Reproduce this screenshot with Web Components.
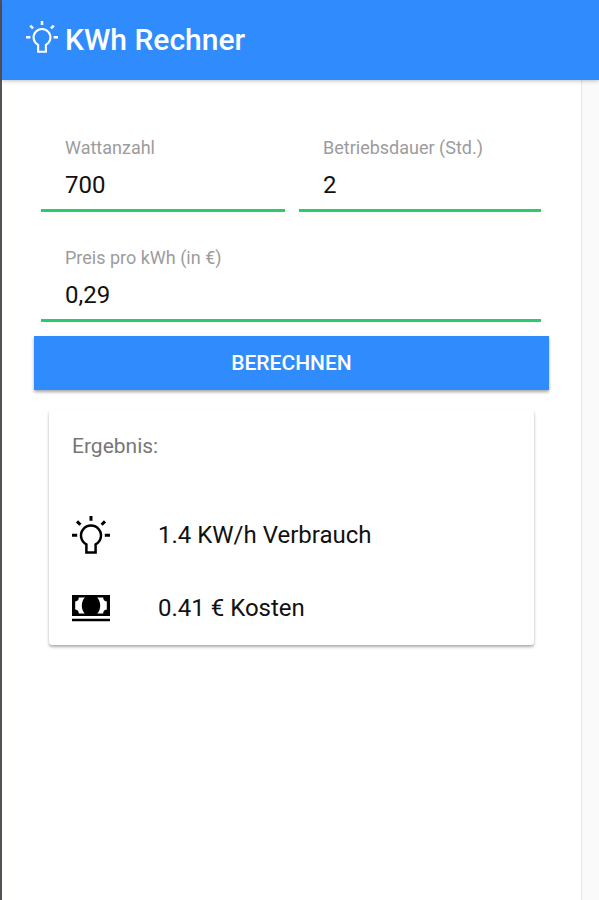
<!DOCTYPE html>
<html lang="de">
<head>
<meta charset="utf-8">
<title>KWh Rechner</title>
<style>
    body{
        margin: 0;
        font-family: Roboto, "Liberation Sans", sans-serif;
        color: #111;
        background-color: #fafafa;
    }
</style>
</head>
<body>
<kwh-app>
    <kwh-header slot="header" title="KWh Rechner"></kwh-header>
    <kwh-field label="Wattanzahl" value="700"></kwh-field>
    <kwh-field label="Betriebsdauer (Std.)" value="2"></kwh-field>
    <kwh-field class="wide" label="Preis pro kWh (in €)" value="0,29"></kwh-field>
    <kwh-button slot="action">Berechnen</kwh-button>
    <kwh-card slot="result" title="Ergebnis:">
        <kwh-result icon="bulb">1.4 KW/h Verbrauch</kwh-result>
        <kwh-result icon="cash">0.41 € Kosten</kwh-result>
    </kwh-card>
</kwh-app>

<script>
const icons = {
    bulb: `
        <svg viewBox="0 0 38 38" fill="none" stroke="currentColor" stroke-width="2.5">
            <path d="M19 0v4.8M0 19.2h5.2M32.8 19.2H38M5 5.4l3.4 3.4M33 5.4l-3.4 3.4" stroke-width="3"/>
            <path d="M14.400 36.600v-8.200a10 10 0 1 1 9.200 0v8.200z"/>
        </svg>`,
    cash: `
        <svg viewBox="0 0 38 38" fill="currentColor">
            <path d="M0 6h38v21H0z"/>
            <path d="M0 29.800h38v2.400H0z"/>
            <path fill="#fff" d="M6.800 8.400h6c-4 4.400-4 11.800 0 16.200h-6c0-2.300-1-3.700-3.600-4.100v-8c2.600-.4 3.600-1.800 3.600-4.100z"/>
            <path fill="#fff" d="M31.200 8.400h-6c4 4.400 4 11.800 0 16.200h6c0-2.300 1-3.700 3.600-4.100v-8c-2.600-.4-3.600-1.800-3.600-4.100z"/>
        </svg>`
};

class KwhElement extends HTMLElement{
    constructor(){
        super();
        this.attachShadow({mode: 'open'});
    }
    connectedCallback(){
        const template = document.createElement('template');
        template.innerHTML = `<style>${this.getStyles()}</style>${this.getTemplate()}`;
        this.shadowRoot.appendChild(template.content.cloneNode(true));
    }
}

class KwhApp extends KwhElement{
    getTemplate(){
        return `
            <slot name="header"></slot>
            <main>
                <section><slot></slot></section>
                <slot name="action"></slot>
                <slot name="result"></slot>
            </main>
        `;
    }
    getStyles(){
        return `
            :host{
                display: flex;
                flex-direction: column;
                box-sizing: border-box;
                height: 900px;
                border-left: 2px solid #57525a;
            }
            main{
                flex: 1;
                box-sizing: border-box;
                width: 580px;
                padding: 50px 32px 0 32px;
                background-color: #fff;
                border-right: 1px solid #e6e6e6;
            }
            section{
                display: grid;
                grid-template-columns: 244px 242px;
                gap: 28px 14px;
                padding: 0 7px;
                margin-bottom: 14px;
            }
            ::slotted(.wide){
                grid-column: 1 / -1;
            }
        `;
    }
}

class KwhHeader extends KwhElement{
    getTemplate(){
        return `${icons.bulb}<h1>${this.getAttribute('title')}</h1>`;
    }
    getStyles(){
        return `
            :host{
                display: flex;
                align-items: center;
                gap: 7px;
                box-sizing: border-box;
                height: 80px;
                padding-left: 24px;
                color: #fff;
                background-color: #308cfc;
                box-shadow: 0 1px 4px rgba(0, 0, 0, .25);
                position: relative;
            }
            svg{
                width: 32px;
                height: 32px;
                margin-top: -7px;
            }
            h1{
                margin: 0;
                font-size: 30px;
                font-weight: 500;
                line-height: 40px;
            }
        `;
    }
}

class KwhField extends KwhElement{
    getTemplate(){
        return `
            <label>${this.getAttribute('label')}</label>
            <span>${this.getAttribute('value')}</span>
        `;
    }
    getStyles(){
        return `
            :host{
                display: flex;
                flex-direction: column;
                box-sizing: border-box;
                height: 82px;
                padding: 6px 24px 0;
                border-bottom: 3px solid #27cd6b;
            }
            label{
                font-size: 18px;
                line-height: 24px;
                color: #9c9c9c;
            }
            span{
                margin-top: 10px;
                font-size: 24px;
                line-height: 30px;
            }
        `;
    }
}

class KwhButton extends KwhElement{
    getTemplate(){
        return `<button><slot></slot></button>`;
    }
    getStyles(){
        return `
            :host{
                display: block;
            }
            button{
                display: block;
                width: 100%;
                height: 54px;
                padding: 0;
                border: 0;
                font: 500 21px Roboto, "Liberation Sans", sans-serif;
                text-transform: uppercase;
                color: #fff;
                background-color: #308cfc;
                box-shadow: 0 2px 3px rgba(0, 0, 0, .35);
            }
        `;
    }
}

class KwhCard extends KwhElement{
    getTemplate(){
        return `
            <h2>${this.getAttribute('title')}</h2>
            <slot></slot>
        `;
    }
    getStyles(){
        return `
            :host{
                display: block;
                box-sizing: border-box;
                height: 235px;
                margin: 20px 15px 0;
                padding: 21px 23px 0;
                border-radius: 3px;
                background-color: #fff;
                box-shadow: 0 2px 3px rgba(0, 0, 0, .32);
            }
            h2{
                margin: 0 0 37px;
                font-size: 21px;
                font-weight: 400;
                line-height: 30px;
                color: #777;
            }
        `;
    }
}

class KwhResult extends KwhElement{
    getTemplate(){
        return `
            ${icons[this.getAttribute('icon')]}
            <span><slot></slot></span>
        `;
    }
    getStyles(){
        return `
            :host{
                display: flex;
                align-items: center;
                gap: 48px;
                height: 73px;
                font-size: 24px;
            }
            svg{
                width: 38px;
                height: 38px;
                color: #000;
            }
        `;
    }
}

customElements.define('kwh-app', KwhApp);
customElements.define('kwh-header', KwhHeader);
customElements.define('kwh-field', KwhField);
customElements.define('kwh-button', KwhButton);
customElements.define('kwh-card', KwhCard);
customElements.define('kwh-result', KwhResult);
</script>
</body>
</html>
